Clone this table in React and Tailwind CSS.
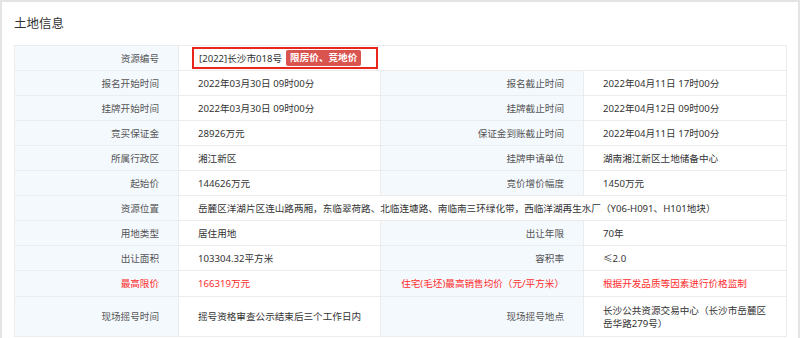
import React from "react";

const L = "bg-[#f4f9fe] text-right pr-[19px] text-[#555]";
const V = "bg-white text-left pl-[19px] text-[#333]";

const rows = [
  ["报名开始时间", "2022年03月30日 09时00分", "报名截止时间", "2022年04月11日 17时00分"],
  ["挂牌开始时间", "2022年03月30日 09时00分", "挂牌截止时间", "2022年04月12日 09时00分"],
  ["竞买保证金", "28926万元", "保证金到账截止时间", "2022年04月11日 17时00分"],
  ["所属行政区", "湘江新区", "挂牌申请单位", "湖南湘江新区土地储备中心"],
  ["起始价", "144626万元", "竞价增价幅度", "1450万元"],
];

const App = () => {
  return (
    <div
      className="w-[800px] h-[338px] overflow-hidden bg-white border-t-2 border-l-2 border-r-2 border-[#e4e4e4] pl-[12px] pr-[10px]"
      style={{ fontFamily: '"Noto Sans", "Noto Sans CJK SC", sans-serif' }}
    >
      <h2 className="h-[43px] pt-[14px] text-[12.5px] leading-[16px] text-[#333]">土地信息</h2>
      <table className="table-fixed border-collapse w-[772px] text-[9.6px] leading-[13px]">
        <colgroup>
          <col className="w-[164px]" />
          <col className="w-[202px]" />
          <col className="w-[203px]" />
          <col className="w-[203px]" />
        </colgroup>
        <tbody className="[&_td]:border [&_td]:border-[#ececec]">
          <tr className="h-[25px]">
            <td className={L}>资源编号</td>
            <td colSpan={3} className="bg-white pl-[13px] py-0">
              <div className="flex items-center h-[22px] w-[186px] border-2 border-[#e8261c] pl-[5px] text-[#333]">
                <span>[2022]长沙市018号</span>
                <span className="ml-[4px] h-[16px] px-[4px] rounded-[2px] bg-[#d9534f] text-white font-bold leading-[16px]">
                  限房价、竞地价
                </span>
              </div>
            </td>
          </tr>
          {rows.map((r) => (
            <tr key={r[0]} className="h-[25px]">
              <td className={L}>{r[0]}</td>
              <td className={V}>{r[1]}</td>
              <td className={L}>{r[2]}</td>
              <td className={V}>{r[3]}</td>
            </tr>
          ))}
          <tr className="h-[25px]">
            <td className={L}>资源位置</td>
            <td colSpan={3} className={V}>
              岳麓区洋湖片区连山路两厢，东临翠荷路、北临连塘路、南临南三环绿化带，西临洋湖再生水厂（Y06-H091、H101地块）
            </td>
          </tr>
          <tr className="h-[25px]">
            <td className={L}>用地类型</td>
            <td className={V}>居住用地</td>
            <td className={L}>出让年限</td>
            <td className={V}>70年</td>
          </tr>
          <tr className="h-[25px]">
            <td className={L}>出让面积</td>
            <td className={V}>103304.32平方米</td>
            <td className={L}>容积率</td>
            <td className={V}>≤2.0</td>
          </tr>
          <tr className="h-[26px]">
            <td className={L + " !text-[#ff2d2d]"}>最高限价</td>
            <td className={V + " !text-[#ff2d2d]"}>166319万元</td>
            <td className={L + " !text-[#ff2d2d] whitespace-nowrap"}>住宅(毛坯)最高销售均价（元/平方米）</td>
            <td className={V + " !text-[#ff2d2d]"}>根据开发品质等因素进行价格监制</td>
          </tr>
          <tr className="h-[40px]">
            <td className={L}>现场摇号时间</td>
            <td className={V}>摇号资格审查公示结束后三个工作日内</td>
            <td className={L}>现场摇号地点</td>
            <td className={V + " pr-[12px]"}>长沙公共资源交易中心（长沙市岳麓区岳华路279号）</td>
          </tr>
        </tbody>
      </table>
    </div>
  );
};

export default App;
